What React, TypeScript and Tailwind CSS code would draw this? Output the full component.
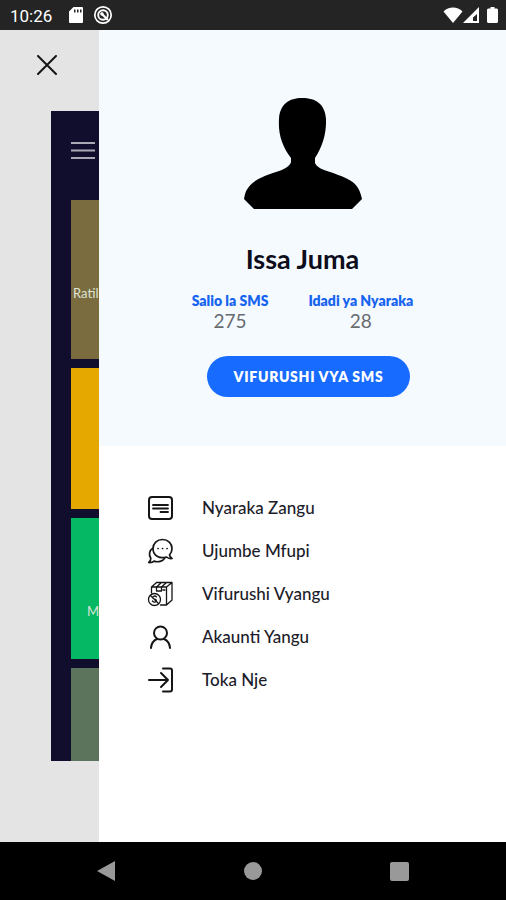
import type { ReactNode } from "react";

const STATS = [
  { id: "sms", label: "Salio la SMS", value: 275 },
  { id: "docs", label: "Idadi ya Nyaraka", value: 28 },
];

const TILES = [
  { color: "bg-[#7a6c3e]", height: "h-[159px]", label: "Ratil", pad: "pl-0.5 pt-[83px]" },
  { color: "bg-[#e5a800]", height: "h-[141px]", label: "", pad: "" },
  { color: "bg-[#05b863]", height: "h-[141px]", label: "M", pad: "pl-4 pt-[83px]" },
  { color: "bg-[#5c735c]", height: "h-[93px]", label: "", pad: "" },
];

function MenuIcon({ children, weight = 2 }: { children: ReactNode; weight?: number }) {
  return (
    <svg
      viewBox="0 0 26 26"
      className="w-[26px] h-[26px] shrink-0"
      fill="none"
      stroke="#151515"
      strokeWidth={weight}
      strokeLinecap="round"
      strokeLinejoin="round"
      aria-hidden="true"
    >
      {children}
    </svg>
  );
}

const MENU = [
  {
    label: "Nyaraka Zangu",
    icon: (
      <MenuIcon>
        <rect x="2" y="2" width="23" height="22" rx="3" />
        <path d="M6 10h15M6 13.500h15M13.500 17h7.500" strokeWidth="1.800" />
      </MenuIcon>
    ),
  },
  {
    label: "Ujumbe Mfupi",
    icon: (
      <MenuIcon weight={1.7}>
        <path d="M6 10.500C6 5.300 10 1.500 15.500 1.500S25 5.300 25 10.500c0 2.900-1 4.900-2.500 6.400.2 1.600 1 2.600 2.500 3.600-2.200.3-4.200-.3-5.500-1.500C12.500 21.300 6 17.500 6 10.500Z" />
        <path d="M5.500 10.500c-3.200 2-4 6.200-1.700 9.800.1 1.700-.6 3-2 4.200 2.300.2 4-.2 5.300-1.400 4 1.500 8.700.3 10.700-3" />
        <path d="M11 10.500h.1M15.500 10.500h.1M20 10.500h.1" strokeWidth="1.700" />
      </MenuIcon>
    ),
  },
  {
    label: "Vifurushi Vyangu",
    icon: (
      <MenuIcon weight={1.3}>
        <path d="M4.500 12V6h15v18h-6M4.500 6l5-4.500h15.500L19.500 6M25 1.500v17.500l-5.500 5M9.500 6l5-4.500M14.500 6l5-4.500" />
        <path d="M9.500 6v4h5V6M16 9h2" />
        <circle cx="7.500" cy="18.500" r="6" />
        <path d="M3.500 14.500l8 8M5.500 20c1.500 2 4.500 1 3.800-.8-.6-1.400-3.200-.8-3.600-2.300-.4-2 2.600-2.500 3.800-1" />
      </MenuIcon>
    ),
  },
  {
    label: "Akaunti Yangu",
    icon: (
      <MenuIcon>
        <circle cx="13.500" cy="9" r="6.500" />
        <path d="M4 24c.4-5 2.500-7.500 6-9M23 24c-.4-5-2.500-7.500-6-9" />
      </MenuIcon>
    ),
  },
  {
    label: "Toka Nje",
    icon: (
      <MenuIcon>
        <path d="M2 13h19M14 6l7 7-7 7M16 1.500h7q2 0 2 2v19q0 2-2 2h-7" />
      </MenuIcon>
    ),
  },
];

function StatusBar() {
  return (
    <header className="h-[30px] shrink-0 bg-[#242424] text-white flex items-center pl-2.5 pr-2">
      <span className="font-[Roboto,sans-serif] text-[17px] leading-5 pt-0.5">10:26</span>
      <svg viewBox="0 0 14 16" className="w-3.5 h-4 ml-[17px]" aria-hidden="true">
        <path
          fill="#fff"
          fillRule="evenodd"
          d="M4.500 0H13q1 0 1 1v14q0 1-1 1H1q-1 0-1-1V4.500ZM5 2.500v3h1.500v-3ZM8 2.500v3h1.500v-3ZM11 2.500v3h1.500v-3Z"
        />
      </svg>
      <svg viewBox="0 0 20 20" className="w-5 h-5 ml-2.5" fill="none" stroke="#fff" aria-hidden="true">
        <circle cx="10" cy="10" r="8.200" strokeWidth="1.700" />
        <circle cx="10" cy="10" r="4.800" strokeWidth="1.900" />
        <path d="M8 8l7 7" strokeWidth="2.200" />
        <circle cx="9" cy="9" r="1.700" fill="#fff" stroke="none" />
      </svg>
      <div className="ml-auto flex items-center">
        <svg viewBox="0 0 20 16" className="w-5 h-4" aria-hidden="true">
          <path fill="#fff" d="M10 16 .5 4.500C5.500-.7 14.500-.7 19.500 4.500Z" />
        </svg>
        <svg viewBox="0 0 16 16" className="w-4 h-4" aria-hidden="true">
          <path fill="#fff" fillRule="evenodd" d="M16 0v16H0ZM14 7l-4 3.500V14h4Z" />
        </svg>
        <svg viewBox="0 0 11 16" className="w-[11px] h-4 ml-2" aria-hidden="true">
          <path fill="#fff" d="M3.500 0h4v1.500H10l1 1V15l-1 1H1l-1-1V2.500l1-1h2.500Z" />
        </svg>
      </div>
    </header>
  );
}

// The shrunken home screen that stays visible beside the open drawer
function HomePreview() {
  return (
    <div className="ml-[51px] mt-9 pt-[31px] pl-5 bg-[#100e2c] overflow-hidden">
      <svg viewBox="0 0 24 17" className="w-6 h-[17px]" stroke="#a9a9b4" strokeWidth="2" aria-hidden="true">
        <path d="M0 1h24M0 8.500h24M0 16h24" />
      </svg>
      <div className="mt-[41px] flex flex-col gap-[9px]">
        {TILES.map(tile => (
          <div key={tile.color} className={`${tile.color} ${tile.height} ${tile.pad}`}>
            <span className="block text-[13px] leading-5 text-[#dfe3d8]">{tile.label}</span>
          </div>
        ))}
      </div>
    </div>
  );
}

function Profile() {
  return (
    <section className="bg-[#f5faff] flex flex-col items-center pt-[68px] pb-[49px]">
      <svg viewBox="0 0 118 111" className="w-[118px] h-[111px]" role="img" aria-label="Issa Juma">
        <path d="M58 0C72 0 81 6 82 21c.5 14-3 27-11 39v5c2 4 6 6 12 8 15 5 27 9 31 17 2 3 3 7 4 11l-10 10H10L0 101c1-4 1-7 4-11 5-8 16-12 31-17 6-2 11-5 12-9v-4C38 48 34 36 35 21 36 6 45 0 58 0Z" />
      </svg>
      <h1 className="mt-[34px] text-[27px] leading-8 font-bold text-[#0d0d1c]">Issa Juma</h1>
      <dl className="mt-4 flex gap-10">
        {STATS.map(s => (
          <div key={s.id} className="text-center">
            <dt className="text-sm leading-5 font-extrabold text-[#1765ee]">{s.label}</dt>
            <dd className="text-[19px] leading-5 text-[#686b70]">{s.value}</dd>
          </div>
        ))}
      </dl>
      <button className="ml-3 mt-[25px] h-[41px] px-[27px] rounded-full bg-[#186bff] text-white text-sm font-extrabold tracking-wider">
        VIFURUSHI VYA SMS
      </button>
    </section>
  );
}

export default function App() {
  return (
    <div className="min-h-screen flex flex-col bg-white font-[Lato,sans-serif]">
      <StatusBar />
      <div className="flex-1 flex">
        <aside className="w-[99px] shrink-0 bg-[#e4e4e4]">
          <button aria-label="Funga" className="block ml-[37px] mt-[25px] w-5 h-5">
            <svg viewBox="0 0 20 20" className="w-5 h-5" stroke="#151515" strokeWidth="2" strokeLinecap="round">
              <path d="M1 1l18 18M19 1 1 19" />
            </svg>
          </button>
          <HomePreview />
        </aside>
        <main className="flex-1 min-w-0">
          <Profile />
          <nav className="pt-10 pl-12">
            <ul>
              {MENU.map(item => (
                <li key={item.label}>
                  <a href="#" className="h-[43px] flex items-center gap-[29px] text-[17px] font-medium text-[#1c1c2a]">
                    {item.icon}
                    {item.label}
                  </a>
                </li>
              ))}
            </ul>
          </nav>
        </main>
      </div>
      <footer className="h-[58px] shrink-0 bg-black flex items-center justify-between pl-[97px] pr-[97px]">
        <button aria-label="Back">
          <svg viewBox="0 0 18 20" className="w-[18px] h-5" fill="#999">
            <path d="M18 0v20L0 10Z" />
          </svg>
        </button>
        <button aria-label="Home" className="w-[18px] h-[18px] rounded-full bg-[#999]" />
        <button aria-label="Overview" className="w-[19px] h-[19px] rounded-xs bg-[#999]" />
      </footer>
    </div>
  );
}
